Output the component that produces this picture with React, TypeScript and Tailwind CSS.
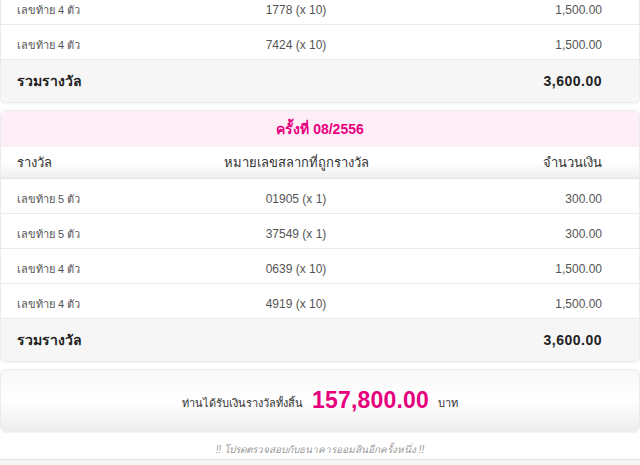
import React from 'react'

interface PrizeRow {
  label: string
  number: string
  amount: string
}

const draw1: PrizeRow[] = [
  { label: 'เลขท้าย 4 ตัว', number: '1778 (x 10)', amount: '1,500.00' },
  { label: 'เลขท้าย 4 ตัว', number: '7424 (x 10)', amount: '1,500.00' },
]

const draw2: PrizeRow[] = [
  { label: 'เลขท้าย 5 ตัว', number: '01905 (x 1)', amount: '300.00' },
  { label: 'เลขท้าย 5 ตัว', number: '37549 (x 1)', amount: '300.00' },
  { label: 'เลขท้าย 4 ตัว', number: '0639 (x 10)', amount: '1,500.00' },
  { label: 'เลขท้าย 4 ตัว', number: '4919 (x 10)', amount: '1,500.00' },
]

const cols = 'grid grid-cols-[180px_1fr_207px] items-center pl-4 pr-[37px]'

function Row({ row }: { row: PrizeRow }) {
  return (
    <div className={`${cols} h-[35px] pt-[6px] border-b border-[#ececec] text-[12px] text-[#555]`}>
      <div className="text-[11px]">{row.label}</div>
      <div className="text-center">{row.number}</div>
      <div className="text-right">{row.amount}</div>
    </div>
  )
}

function TotalRow({ amount }: { amount: string }) {
  return (
    <div className={`${cols} h-[42px] bg-[#f6f6f6] rounded-b-md`}>
      <div className="text-[14px] font-bold text-[#222]">รวมรางวัล</div>
      <div />
      <div className="text-right text-[14px] font-bold text-[#222] tracking-[0.5px]">{amount}</div>
    </div>
  )
}

function DrawCard({ title, rows, total, cut }: { title?: string; rows: PrizeRow[]; total: string; cut?: boolean }) {
  return (
    <div className={`border border-[#ebebeb] rounded-md bg-white shadow-[0_1px_2px_rgba(0,0,0,0.05)] ${cut ? 'rounded-t-none border-t-0' : ''}`}>
      {title && (
        <>
          <div className="h-[36px] flex items-center justify-center bg-[#fdeef7] rounded-t-md text-[14px] font-bold text-[#e6007e]">
            {title}
          </div>
          <div className={`${cols} h-[32px] bg-gradient-to-b from-white via-white to-[#eeeeee] border-b border-[#e4e4e4] text-[13px] text-[#333]`}>
            <div>รางวัล</div>
            <div className="text-center">หมายเลขสลากที่ถูกรางวัล</div>
            <div className="text-right">จำนวนเงิน</div>
          </div>
        </>
      )}
      {rows.map((r, i) => (
        <Row key={i} row={r} />
      ))}
      <TotalRow amount={total} />
    </div>
  )
}

export default function App() {
  return (
    <div className="w-[640px] h-[465px] overflow-hidden bg-white" style={{ fontFamily: 'Tahoma, "Liberation Sans", "Noto Sans", sans-serif' }}>
      <div className="-mt-[10px] flex flex-col">
        <DrawCard rows={draw1} total="3,600.00" cut />
        <div className="mt-[7px]">
          <DrawCard title="ครั้งที่ 08/2556" rows={draw2} total="3,600.00" />
        </div>
        <div className="mt-[7px] h-[62px] border border-[#ebebeb] rounded-md bg-gradient-to-b from-[#f8f8f8] via-white to-[#eeeeee] flex items-center justify-center gap-[9px] shadow-[0_2px_1px_rgba(0,0,0,0.05)]">
          <span className="text-[11px] text-[#333] mt-[6px]">ท่านได้รับเงินรางวัลทั้งสิ้น</span>
          <span className="text-[23px] font-bold text-[#e6007e] tracking-[0.2px]">157,800.00</span>
          <span className="text-[11px] text-[#333] mt-[6px]">บาท</span>
        </div>
        <div className="mt-[2px] h-[27px] pt-[6px] flex items-center justify-center border-b border-[#e2e2e2] text-[10px] italic text-[#999]">
          !! โปรดตรวจสอบกับธนาคารออมสินอีกครั้งหนึ่ง !!
        </div>
        <div className="h-[20px] bg-[#f6f6f6]" />
      </div>
    </div>
  )
}
